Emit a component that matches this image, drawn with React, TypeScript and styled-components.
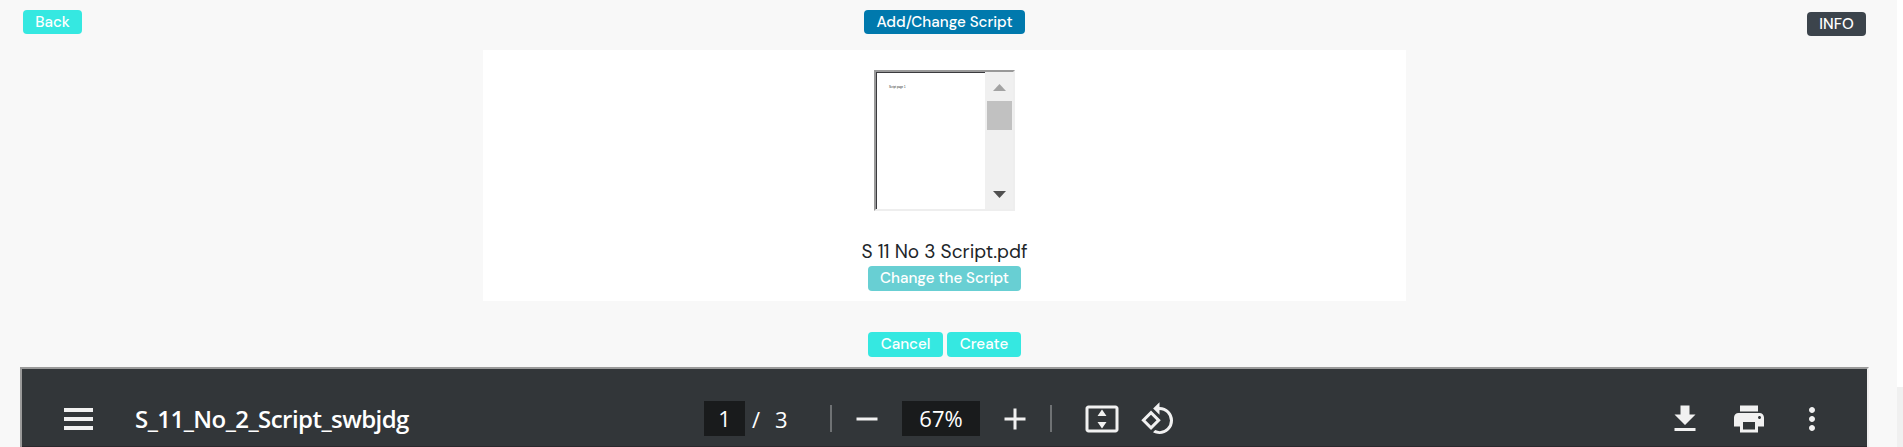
import React from 'react';
import styled, { createGlobalStyle } from 'styled-components';

const GlobalStyle = createGlobalStyle`
  * { box-sizing: border-box; }
  html, body { margin: 0; height: 100%; overflow: hidden; background: #f8f8f8; }
`;

const ui = `'DM Sans', Inter, 'Liberation Sans', sans-serif`;
const viewerFont = `'Segoe UI', 'Open Sans', 'Noto Sans', sans-serif`;

const Page = styled.div`
  display: flex;
  width: 100%;
  height: 447px;
  overflow: hidden;
  background: #f8f8f8;
  font-family: ${ui};
`;

const Content = styled.main`
  width: 1897px;
  display: flex;
  flex-direction: column;
`;

const ScrollTrack = styled.div`
  width: 6px;
  background: #f0f0f0;
`;

const ScrollThumb = styled.div`
  height: 387px;
  background: #fff;
`;

const Header = styled.header`
  display: flex;
  justify-content: space-between;
  height: 50px;
  padding: 10px 31px 0 23px;
`;

const Button = styled.button<{ $bg?: string; $w: number; $h?: number; $top?: number }>`
  display: flex;
  justify-content: center;
  align-items: center;
  flex: none;
  width: ${p => p.$w}px;
  height: ${p => p.$h ?? 24}px;
  margin: ${p => p.$top ?? 0}px 0 0;
  padding: 0 0 1px;
  border: 0;
  border-radius: 4px;
  background: ${p => p.$bg ?? '#35e8e1'};
  color: #fff;
  font: 500 15.2px/20px ${ui};
  white-space: nowrap;
`;

const Panel = styled.section`
  display: flex;
  flex-direction: column;
  align-items: center;
  width: 923px;
  height: 251px;
  margin-left: 483px;
  padding-top: 20px;
  background: #fff;
`;

const Preview = styled.div`
  display: flex;
  width: 141px;
  height: 141px;
  border: 2px solid;
  border-color: #999 #eee #eee #999;
  background: #fff;
`;

const PreviewPage = styled.div`
  flex: 1;
  border-top: 1px solid #3a3a3e;
  border-left: 1px solid #3a3a3e;
  padding: 12px 0 0 12px;
  color: #222;
  font: 2.8px/5px 'Liberation Sans', sans-serif;
`;

const PreviewScroll = styled.div`
  display: flex;
  flex-direction: column;
  align-items: center;
  width: 28px;
  padding: 12px 0 0 1px;
  background: #f0f0f0;
`;

const Arrow = styled.svg`
  display: block;
  width: 13px;
  height: 7px;
`;

const PreviewThumb = styled.div`
  width: 25px;
  height: 29px;
  margin: 10px 0 61px;
  background: #c1c1c1;
`;

const FileName = styled.div`
  height: 27px;
  margin-top: 28px;
  color: #212529;
  font: 400 19.1px/26px ${ui};
  white-space: nowrap;
`;

const Actions = styled.div`
  display: flex;
  gap: 4px;
  height: 66px;
  padding: 31px 0 0 868px;
`;

const Viewer = styled.section`
  width: 1849px;
  height: 80px;
  margin-left: 20px;
  border-top: 2px solid #9a9a9a;
  border-left: 2px solid #9a9a9a;
  border-right: 2px solid #eee;
`;

const Toolbar = styled.div`
  display: flex;
  align-items: center;
  height: 78px;
  padding: 23px 37px 1px 42px;
  border-bottom: 1px solid #2b282d;
  background: #323639;
  color: #fff;
  font-family: ${viewerFont};
`;

const Title = styled.div`
  width: 611px;
  padding-left: 42px;
  font-size: 24px;
  font-weight: 600;
  line-height: 34px;
  letter-spacing: -0.55px;
  white-space: nowrap;
`;

const Field = styled.div<{ $w: number }>`
  width: ${p => p.$w}px;
  height: 35px;
  background: #191b1c;
  font-size: 22px;
  line-height: 34px;
  text-align: center;
`;

const PageTotal = styled.div`
  display: flex;
  gap: 15px;
  width: 85px;
  padding-left: 7px;
  font-size: 22px;
  line-height: 34px;
`;

const Divider = styled.div`
  width: 2px;
  height: 27px;
  background: #6f7274;
`;

const Icon = styled.svg<{ $ml?: number; $mr?: number }>`
  flex: none;
  width: 36px;
  height: 36px;
  margin-left: ${p => p.$ml ?? 0}px;
  margin-right: ${p => p.$mr ?? 0}px;
  fill: #f1f1f1;
`;

const Spacer = styled.div`
  flex: 1;
`;

const Menu = styled.div`
  display: flex;
  flex-direction: column;
  gap: 5px;
  width: 29px;
`;

const MenuLine = styled.div`
  height: 4px;
  background: #f1f1f1;
`;

export default function App() {
  return (
    <>
      <GlobalStyle />
      <Page>
        <Content>
          <Header>
            <Button $w={59}>Back</Button>
            <Button $w={161} $bg="#0079ad">Add/Change Script</Button>
            <Button $w={59} $top={2} $bg="#3c444c">INFO</Button>
          </Header>
          <Panel>
            <Preview>
              <PreviewPage>Script page 1</PreviewPage>
              <PreviewScroll>
                <Arrow viewBox="0 0 13 7"><path fill="#a3a3a3" d="M6.5 0 13 7H0z" /></Arrow>
                <PreviewThumb />
                <Arrow viewBox="0 0 13 7"><path fill="#505050" d="M0 0h13L6.5 7z" /></Arrow>
              </PreviewScroll>
            </Preview>
            <FileName>S 11 No 3 Script.pdf</FileName>
            <Button $w={153} $h={25} $bg="#68cfd3">Change the Script</Button>
          </Panel>
          <Actions>
            <Button $w={75} $h={25}>Cancel</Button>
            <Button $w={74} $h={25}>Create</Button>
          </Actions>
          <Viewer>
            <Toolbar>
              <Menu><MenuLine /><MenuLine /><MenuLine /></Menu>
              <Title>S_11_No_2_Script_swbjdg</Title>
              <Field $w={41}>1</Field>
              <PageTotal><span>/</span><span>3</span></PageTotal>
              <Divider />
              <Icon $ml={17} $mr={17} viewBox="0 0 24 24"><path d="M5 11h14v2H5z" /></Icon>
              <Field $w={78}>67%</Field>
              <Icon $ml={17} $mr={17} viewBox="0 0 24 24"><path d="M19 13h-6v6h-2v-6H5v-2h6V5h2v6h6z" /></Icon>
              <Divider />
              <Icon $ml={32} viewBox="0 0 24 24">
                <path fillRule="evenodd" d="M3 3h18c1.1 0 2 .9 2 2v14c0 1.1-.9 2-2 2H3c-1.1 0-2-.9-2-2V5c0-1.1.9-2 2-2zm0 2v14h18V5zM12 5.7l3 4.3H9zM9 14h6l-3 4.3z" />
              </Icon>
              <Icon $ml={20} viewBox="0 0 24 24">
                <path d="M7.34 6.41.86 12.9l6.49 6.48 6.49-6.48-6.5-6.49zM3.69 12.9l3.66-3.66L11 12.9l-3.66 3.66-3.65-3.66zm15.67-6.26A8.95 8.95 0 0 0 13 4V.76L8.76 5 13 9.24V6c1.79 0 3.58.68 4.95 2.05a7.007 7.007 0 0 1 0 9.9 6.973 6.973 0 0 1-7.79 1.44l-1.49 1.49C10.02 21.62 11.51 22 13 22c2.3 0 4.61-.88 6.36-2.64a8.98 8.98 0 0 0 0-12.72z" />
              </Icon>
              <Spacer />
              <Icon viewBox="0 0 24 24"><path d="M19 9h-4V3H9v6H5l7 7zM5 18v2h14v-2z" /></Icon>
              <Icon $ml={28} viewBox="0 0 24 24"><path d="M19 8H5c-1.66 0-3 1.34-3 3v6h4v4h12v-4h4v-6c0-1.66-1.34-3-3-3zm-3 11H8v-5h8zm3-7c-.55 0-1-.45-1-1s.45-1 1-1 1 .45 1 1-.45 1-1 1zM18 3H6v4h12z" /></Icon>
              <Icon $ml={27} viewBox="0 0 24 24"><path d="M12 8c1.1 0 2-.9 2-2s-.9-2-2-2-2 .9-2 2 .9 2 2 2zm0 2c-1.1 0-2 .9-2 2s.9 2 2 2 2-.9 2-2-.9-2-2-2zm0 6c-1.1 0-2 .9-2 2s.9 2 2 2 2-.9 2-2-.9-2-2-2z" /></Icon>
            </Toolbar>
          </Viewer>
        </Content>
        <ScrollTrack><ScrollThumb /></ScrollTrack>
      </Page>
    </>
  );
}
